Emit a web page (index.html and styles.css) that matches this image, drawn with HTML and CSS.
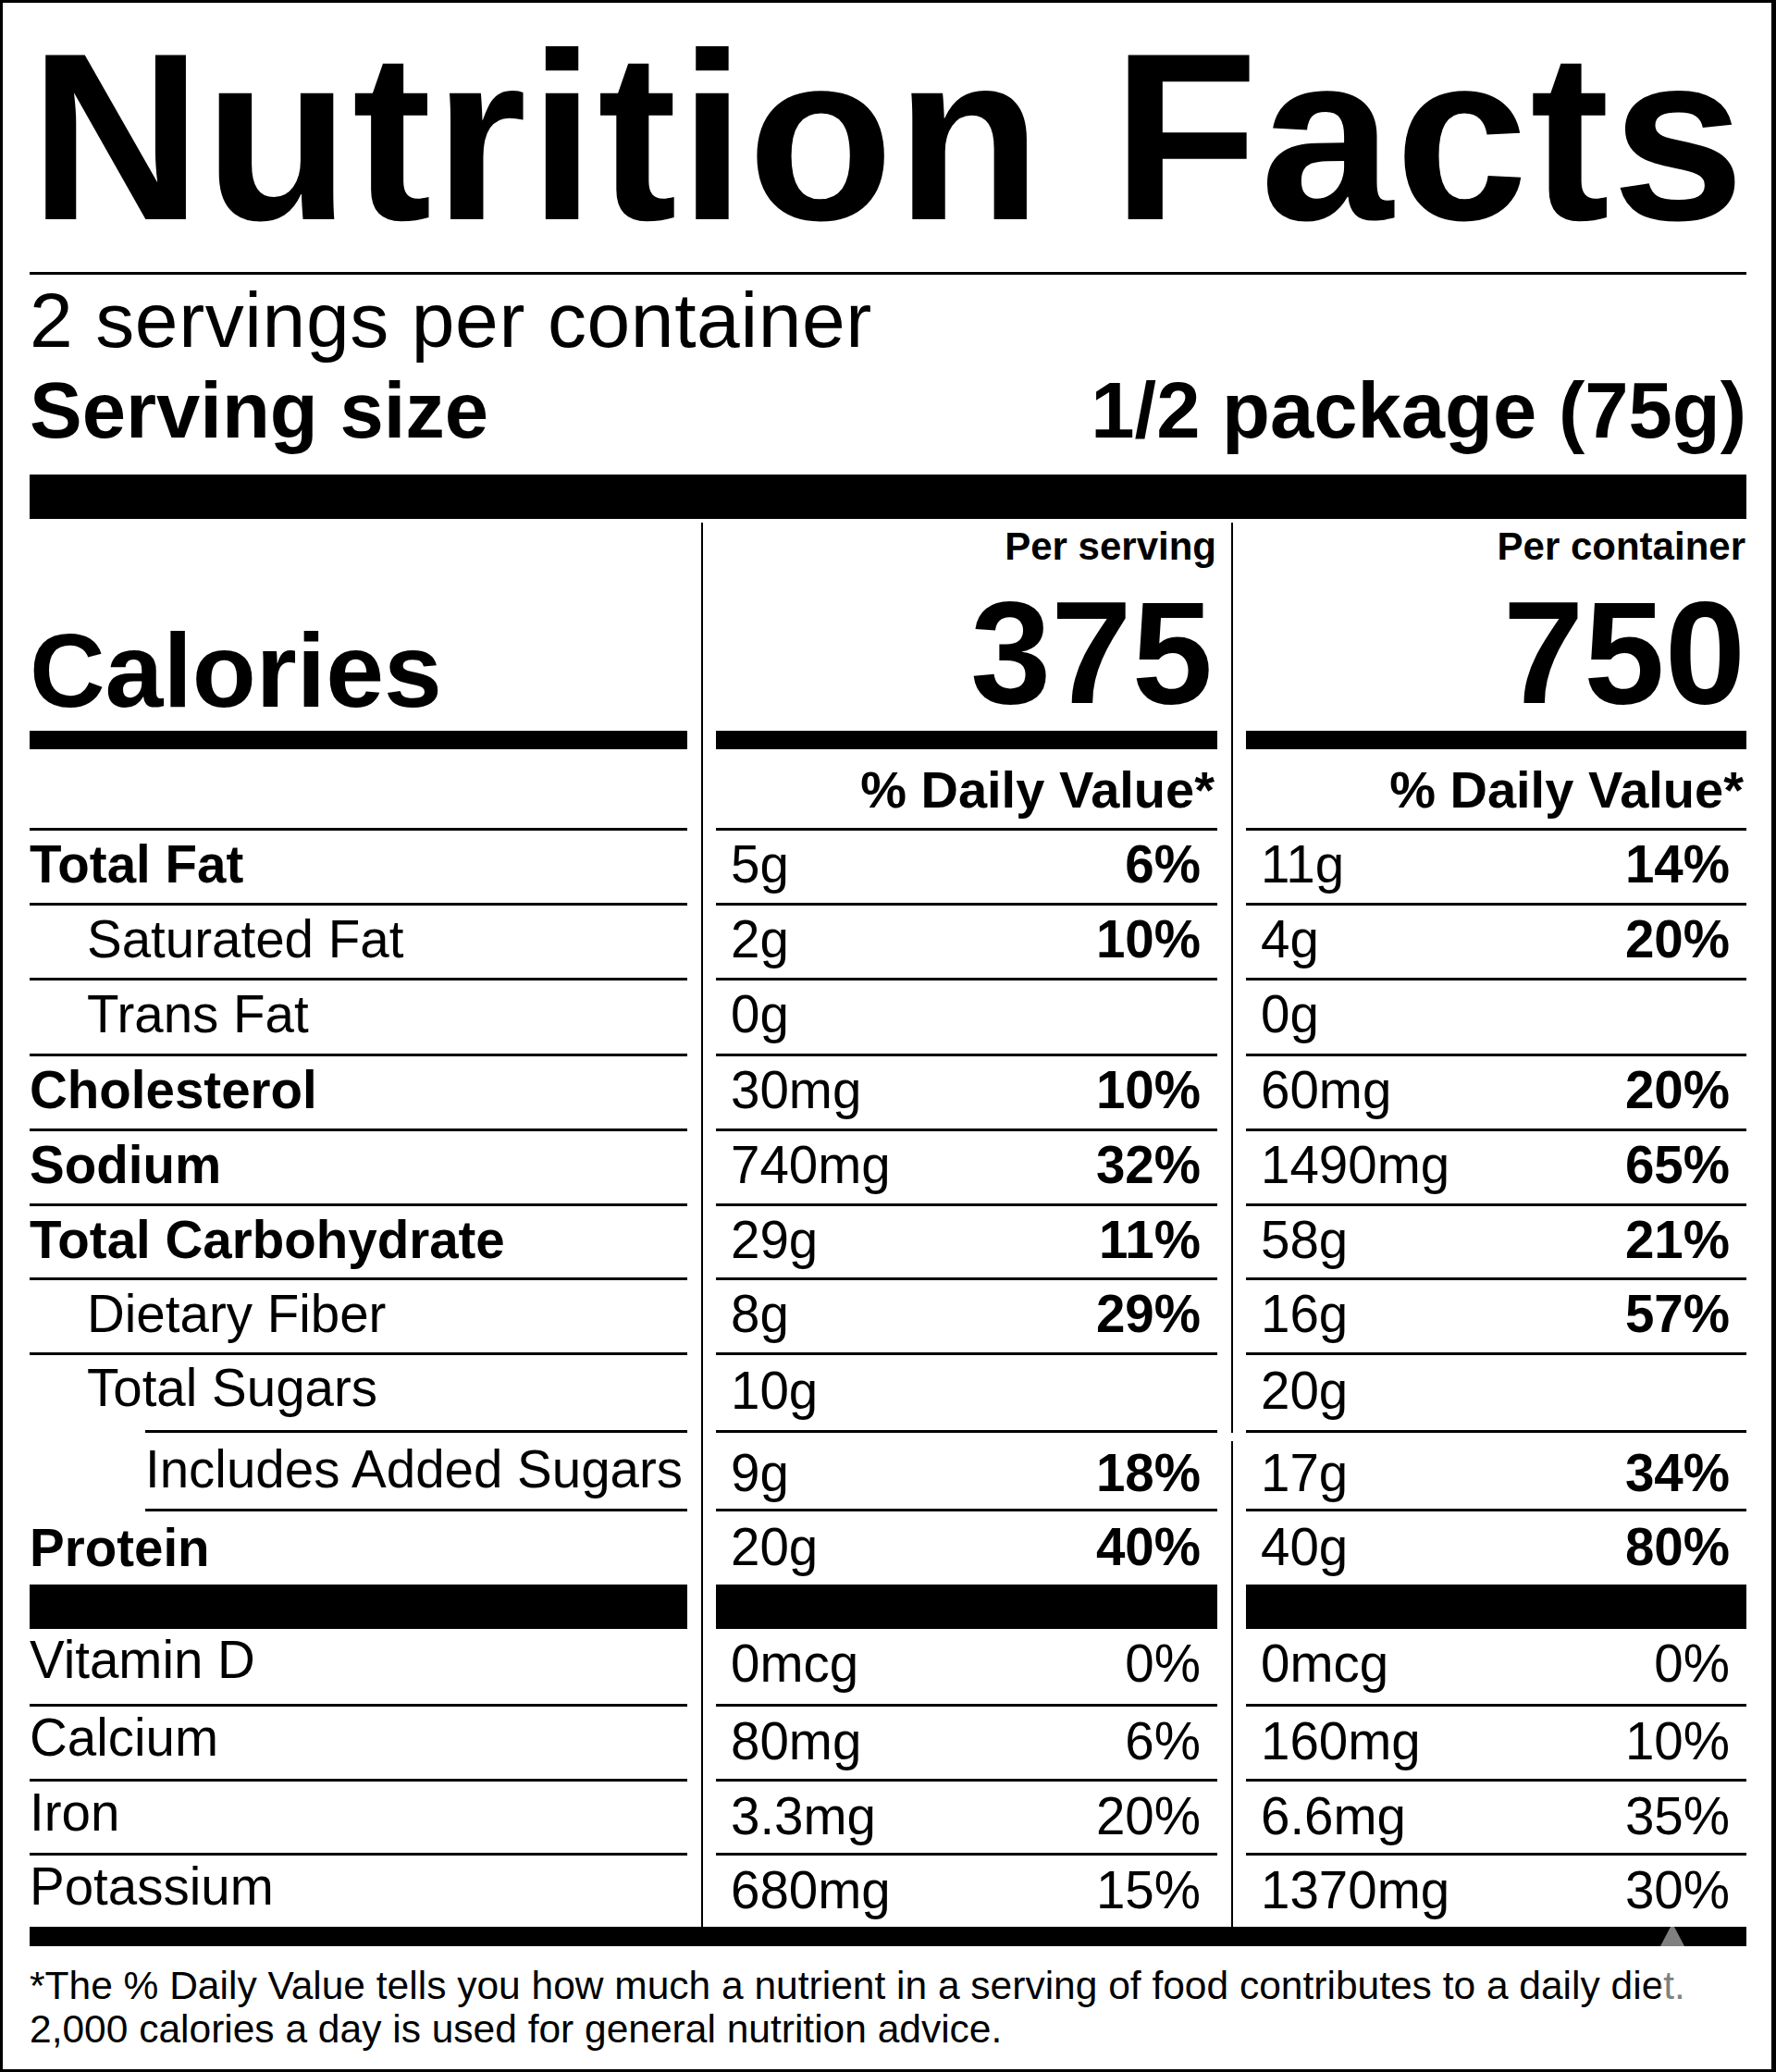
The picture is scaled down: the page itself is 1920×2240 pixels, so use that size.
FILE: index.html
```html
<!DOCTYPE html>
<html lang="en">
<head>
<meta charset="utf-8">
<title>Nutrition Facts</title>
<link rel="stylesheet" href="styles.css">
</head>
<body>
<div class="label">
  <h1 class="title">Nutrition Facts</h1>
  <div class="rule-thin"></div>
  <p class="servings">2 servings per container</p>
  <div class="serving-size"><span>Serving size</span><span>1/2 package (75g)</span></div>
  <div class="bar-thick"></div>

  <div class="grid">
    <div class="divider d1"></div>
    <div class="divider d2a"></div>
    <div class="divider d2b"></div>

    <div class="cal-label">Calories</div>
    <div class="cal-head serving"><span class="per">Per serving</span><span class="kcal">375</span></div>
    <div class="cal-head"><span class="per">Per container</span><span class="kcal">750</span></div>

    <div class="bar-cell"></div>
    <div class="bar-cell"></div>
    <div class="bar-cell"></div>

    <div class="dv-blank"></div>
    <div class="dv">% Daily Value*</div>
    <div class="dv">% Daily Value*</div>

    <div class="lab b">Total Fat</div>
    <div class="val"><span>5g</span><b>6%</b></div>
    <div class="val"><span>11g</span><b>14%</b></div>

    <div class="lab ind">Saturated Fat</div>
    <div class="val"><span>2g</span><b>10%</b></div>
    <div class="val"><span>4g</span><b>20%</b></div>

    <div class="lab ind">Trans Fat</div>
    <div class="val"><span>0g</span></div>
    <div class="val"><span>0g</span></div>

    <div class="lab b">Cholesterol</div>
    <div class="val"><span>30mg</span><b>10%</b></div>
    <div class="val"><span>60mg</span><b>20%</b></div>

    <div class="lab b">Sodium</div>
    <div class="val"><span>740mg</span><b>32%</b></div>
    <div class="val"><span>1490mg</span><b>65%</b></div>

    <div class="lab b">Total Carbohydrate</div>
    <div class="val"><span>29g</span><b>11%</b></div>
    <div class="val"><span>58g</span><b>21%</b></div>

    <div class="lab ind">Dietary Fiber</div>
    <div class="val"><span>8g</span><b>29%</b></div>
    <div class="val"><span>16g</span><b>57%</b></div>

    <div class="lab ind sugars">Total Sugars</div>
    <div class="val sugars"><span>10g</span></div>
    <div class="val sugars"><span>20g</span></div>

    <div class="lab added">Includes Added Sugars</div>
    <div class="val added"><span>9g</span><b>18%</b></div>
    <div class="val added"><span>17g</span><b>34%</b></div>

    <div class="lab b protein">Protein</div>
    <div class="val protein"><span>20g</span><b>40%</b></div>
    <div class="val protein"><span>40g</span><b>80%</b></div>

    <div class="bar-cell"></div>
    <div class="bar-cell"></div>
    <div class="bar-cell"></div>

    <div class="lab vit">Vitamin D</div>
    <div class="val vit"><span>0mcg</span><span>0%</span></div>
    <div class="val vit"><span>0mcg</span><span>0%</span></div>

    <div class="lab vit">Calcium</div>
    <div class="val vit"><span>80mg</span><span>6%</span></div>
    <div class="val vit"><span>160mg</span><span>10%</span></div>

    <div class="lab vit">Iron</div>
    <div class="val vit"><span>3.3mg</span><span>20%</span></div>
    <div class="val vit"><span>6.6mg</span><span>35%</span></div>

    <div class="lab vit last">Potassium</div>
    <div class="val vit last"><span>680mg</span><span>15%</span></div>
    <div class="val vit last"><span>1370mg</span><span>30%</span></div>
  </div>

  <div class="bar-bottom"></div>
  <p class="foot">
    <span class="foot-line">*The % Daily Value tells you how much a nutrient in a serving of food contributes to a daily diet.</span>
    <span class="foot-line">2,000 calories a day is used for general nutrition advice.</span>
  </p>
  <div class="tip"></div>
</div>
</body>
</html>
```

FILE: styles.css
```css
* {
  box-sizing: border-box;
  margin: 0;
  padding: 0;
}

body {
  margin: 0;
  background: #fff;
  color: #000;
  font-family: "Liberation Sans", Arial, Helvetica, sans-serif;
}

.label {
  position: relative;
  width: 1920px;
  height: 2240px;
  border: 3px solid #000;
  border-right-width: 5px;
  padding: 16px 27px 0 29px;
  overflow: hidden;
}

.title {
  font-size: 258px;
  font-weight: 700;
  line-height: 258px;
  letter-spacing: 2.4px;
  white-space: nowrap;
}

.rule-thin {
  height: 3px;
  background: #000;
  margin-top: 17px;
}

.servings {
  font-size: 84px;
  line-height: 84px;
  letter-spacing: 0.6px;
  margin-top: 7px;
  white-space: nowrap;
}

.serving-size {
  display: flex;
  justify-content: space-between;
  font-size: 85px;
  font-weight: 700;
  line-height: 84px;
  margin-top: 14px;
  white-space: nowrap;
}

.bar-thick {
  height: 48px;
  background: #000;
  margin-top: 27px;
}

.grid {
  display: grid;
  grid-template-columns: 711px 31px 542px 31px 541px;
  grid-template-rows: 225px 20px 88px 81px 81px 82px 81px 81px 80px 81px 84px 85px 79px 48px 84px 81px 80px 77px;
  margin-top: 4px;
}

.divider {
  grid-row: 1 / -1;
  width: 2px;
  background: #000;
  justify-self: center;
}

.d1 {
  grid-column: 2;
}

.d2a {
  grid-column: 4;
  grid-row: 1 / 12;
}

.d2b {
  grid-column: 4;
  grid-row: 12 / -1;
  margin-top: 9px;
}

.cal-label {
  font-size: 113px;
  font-weight: 700;
  line-height: 112px;
  align-self: end;
  padding-bottom: 9px;
}

.cal-head {
  display: flex;
  flex-direction: column;
  align-items: flex-end;
  padding-top: 5px;
  padding-right: 1px;
}

.per {
  font-size: 42px;
  font-weight: 700;
  line-height: 42px;
  white-space: nowrap;
}

.kcal {
  font-size: 157px;
  font-weight: 700;
  line-height: 157px;
  margin-top: 15px;
}

.cal-head.serving .kcal {
  margin-right: 4px;
}

.bar-cell {
  background: #000;
}

.dv-blank {
  border-bottom: 3px solid #000;
}

.dv {
  font-size: 56px;
  font-weight: 700;
  line-height: 56px;
  text-align: right;
  padding-top: 16px;
  padding-right: 3px;
  border-bottom: 3px solid #000;
  white-space: nowrap;
}

.lab {
  font-size: 56.5px;
  line-height: 56px;
  padding-top: 9px;
  border-bottom: 3px solid #000;
  white-space: nowrap;
}

.lab.b {
  font-weight: 700;
}

.lab.ind {
  padding-left: 62px;
}

.val {
  display: flex;
  justify-content: space-between;
  font-size: 56.5px;
  line-height: 56px;
  padding: 9px 18px 0 16px;
  border-bottom: 3px solid #000;
  white-space: nowrap;
}

.val b {
  font-weight: 700;
}

.lab.sugars {
  padding-top: 8px;
  border-bottom: none;
  background: linear-gradient(#000, #000) no-repeat right bottom / calc(100% - 125px) 3px;
}

.val.sugars {
  padding-top: 11px;
}

.lab.added {
  margin-left: 125px;
  padding-top: 12px;
}

.val.added {
  padding-top: 16px;
}

.lab.protein {
  padding-top: 12px;
  border-bottom: none;
}

.val.protein {
  padding-top: 11px;
  border-bottom: none;
}

.lab.vit {
  padding-top: 6px;
}

.val.vit {
  padding-top: 10px;
}

.lab.last,
.val.last {
  border-bottom: none;
}

.bar-bottom {
  height: 21px;
  background: #000;
}

.foot {
  margin-top: 19px;
  font-size: 42.5px;
  line-height: 47px;
}

.foot-line {
  display: block;
  white-space: nowrap;
}

.tip {
  position: absolute;
  left: 1792px;
  top: 2101px;
  width: 90px;
  height: 70px;
  background: rgba(255, 255, 255, 0.5);
}

.tip::before {
  content: "";
  position: absolute;
  left: 0;
  top: -21px;
  width: 26px;
  height: 21px;
  background: rgba(255, 255, 255, 0.5);
  clip-path: polygon(11px 0, 15px 0, 26px 100%, 0 100%);
}
```
